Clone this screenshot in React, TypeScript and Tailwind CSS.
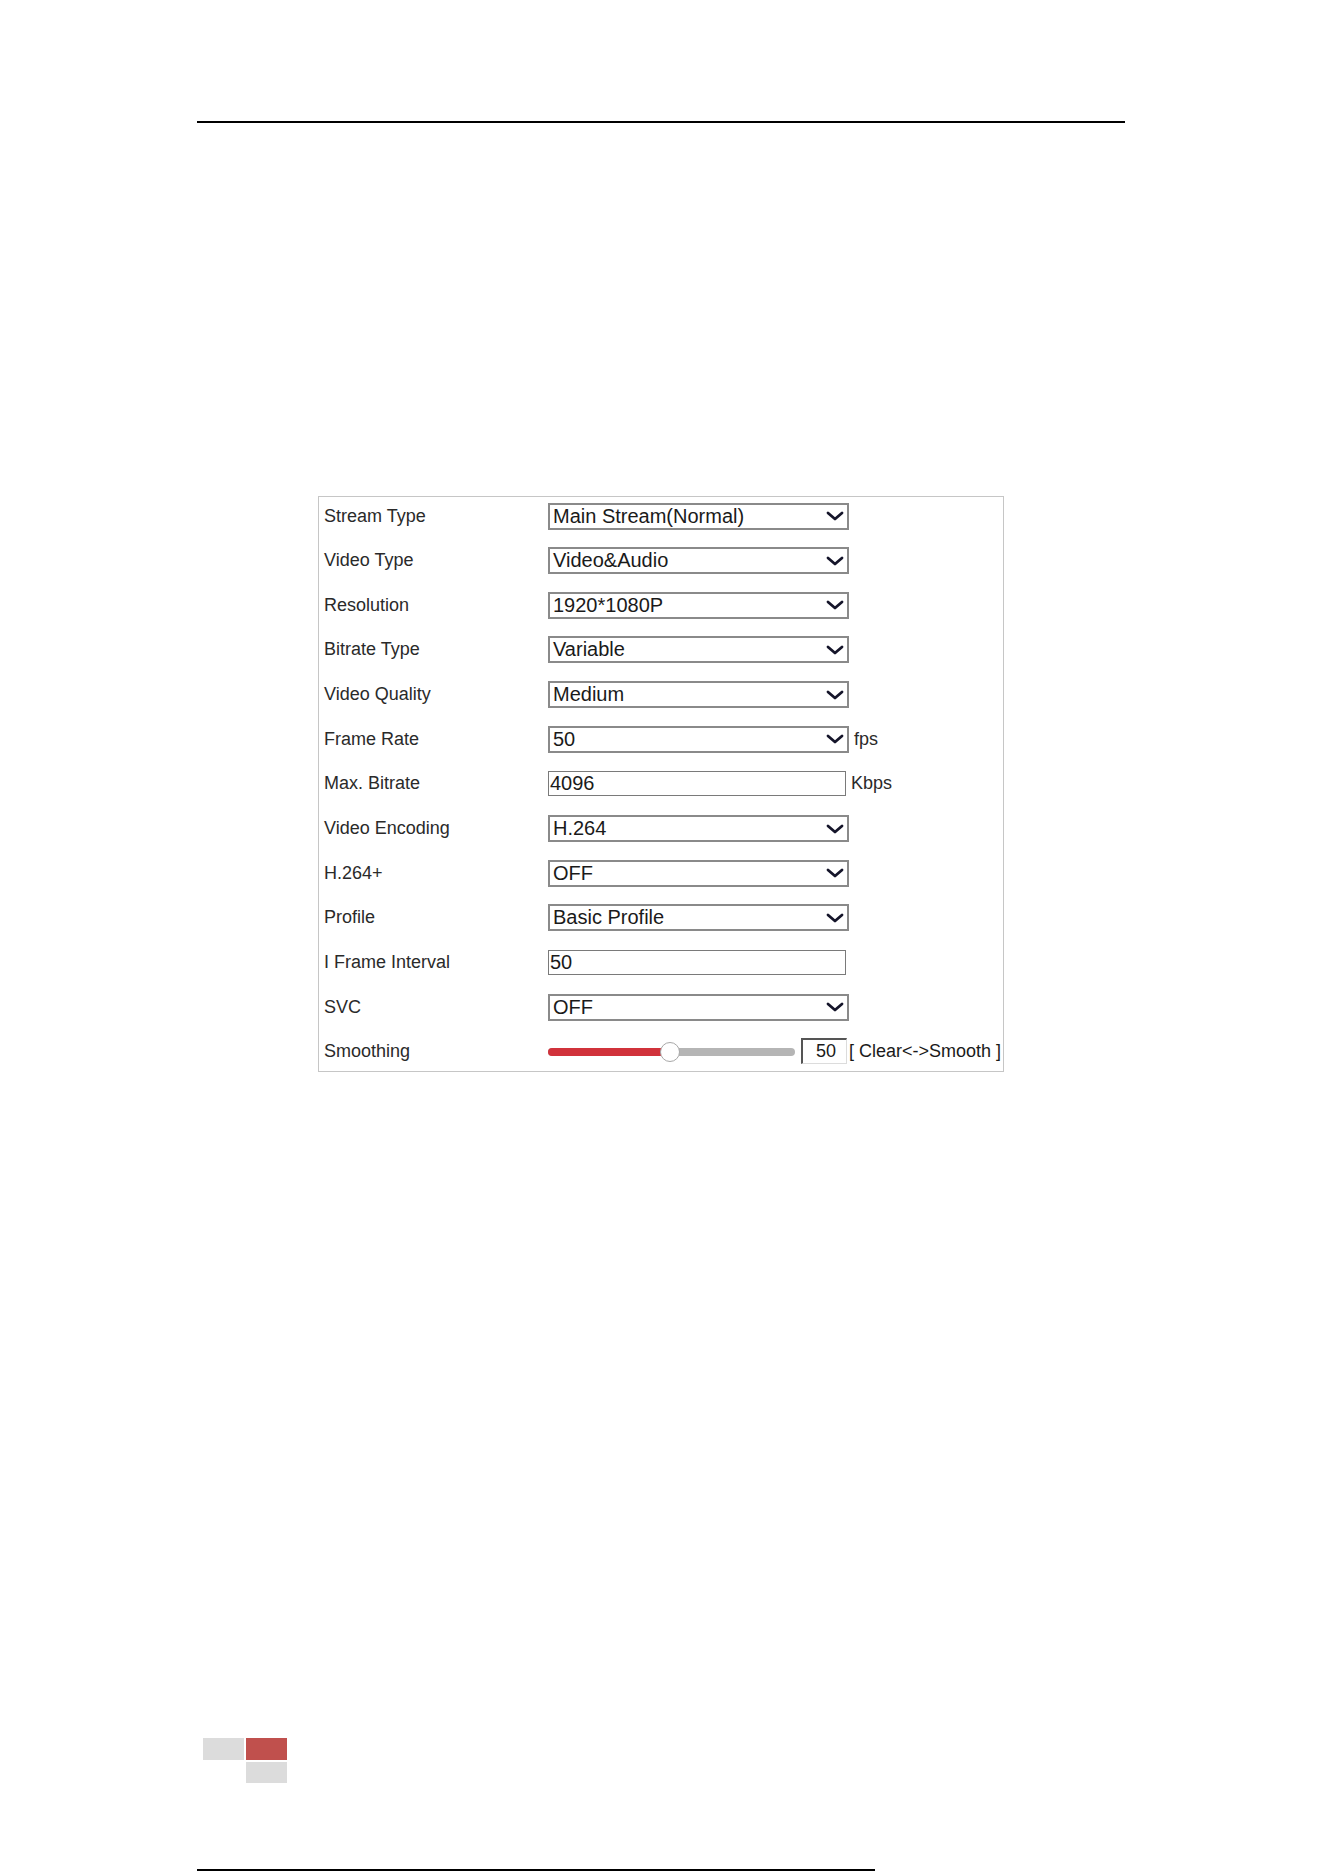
import React from 'react';

type Field =
  | { label: string; kind: 'select'; value: string; unit?: string }
  | { label: string; kind: 'text'; value: string; unit?: string }
  | { label: string; kind: 'slider'; value: number };

const fields: Field[] = [
  { label: 'Stream Type', kind: 'select', value: 'Main Stream(Normal)' },
  { label: 'Video Type', kind: 'select', value: 'Video&Audio' },
  { label: 'Resolution', kind: 'select', value: '1920*1080P' },
  { label: 'Bitrate Type', kind: 'select', value: 'Variable' },
  { label: 'Video Quality', kind: 'select', value: 'Medium' },
  { label: 'Frame Rate', kind: 'select', value: '50', unit: 'fps' },
  { label: 'Max. Bitrate', kind: 'text', value: '4096', unit: 'Kbps' },
  { label: 'Video Encoding', kind: 'select', value: 'H.264' },
  { label: 'H.264+', kind: 'select', value: 'OFF' },
  { label: 'Profile', kind: 'select', value: 'Basic Profile' },
  { label: 'I Frame Interval', kind: 'text', value: '50' },
  { label: 'SVC', kind: 'select', value: 'OFF' },
  { label: 'Smoothing', kind: 'slider', value: 50 },
];

function Chevron() {
  return (
    <svg width="18" height="10" viewBox="0 0 18 10" className="shrink-0">
      <polyline
        points="2,2 9,8 16,2"
        fill="none"
        stroke="#15152a"
        strokeWidth="2.8"
        strokeLinecap="round"
        strokeLinejoin="round"
      />
    </svg>
  );
}

function SelectBox({ value }: { value: string }) {
  return (
    <div className="flex h-[27px] w-[301px] items-center justify-between border-2 border-[#8a8a8a] bg-white pl-[3px] pr-[3px]">
      <span className="text-[20px] leading-[23px] text-[#1a1a1a]">{value}</span>
      <Chevron />
    </div>
  );
}

function TextBox({ value }: { value: string }) {
  return (
    <div className="flex h-[25px] w-[298px] items-center border border-[#7a7a7a] bg-white pl-[1px]">
      <span className="text-[20px] leading-[23px] text-[#1a1a1a]">{value}</span>
    </div>
  );
}

function Smoothing({ value }: { value: number }) {
  // track is 247px wide, thumb sits where the red fill ends
  const fill = Math.round((value / 100) * 226);
  return (
    <div className="flex items-center">
      <div className="relative flex h-[20px] w-[247px] items-center">
        <div className="flex h-[8px] w-full overflow-hidden rounded-full bg-[#b5b5b5]">
          <div className="h-full bg-[#d1323b]" style={{ width: fill + 4 }} />
        </div>
        <div
          className="absolute top-0 h-[20px] w-[20px] rounded-full border-[1.5px] border-[#a8a8a8] bg-white"
          style={{ left: fill - 1 }}
        />
      </div>
      <div className="ml-[6px] -mt-[2px] flex h-[26px] w-[46px] items-center justify-end border border-t-2 border-l-2 border-t-[#555] border-l-[#555] border-r-[#dcdcdc] border-b-[#dcdcdc] pr-[10px]">
        <span className="text-[18px] text-[#1a1a1a]">{value}</span>
      </div>
      <span className="ml-[2px] text-[18px] text-[#1a1a1a]">[ Clear&lt;-&gt;Smooth ]</span>
    </div>
  );
}

export default function App() {
  return (
    <div className="flex min-h-[1872px] w-[1324px] flex-col bg-white font-['Liberation_Sans',Arial,sans-serif]">
      <div className="ml-[197px] mt-[121px] h-[2px] w-[928px] bg-black" />

      <div className="ml-[318px] mt-[373px] flex w-[686px] flex-col gap-[6.67px] border border-[#c6c6c6] pl-[5px]">
        {fields.map((f) => (
          <div key={f.label} className="flex h-[38px] items-center">
            <div className="w-[224px] text-[18px] text-[#2a2a2a]">{f.label}</div>
            {f.kind === 'select' && (
              <div className="flex items-center">
                <SelectBox value={f.value} />
                {f.unit && <span className="ml-[5px] text-[18px] text-[#2a2a2a]">{f.unit}</span>}
              </div>
            )}
            {f.kind === 'text' && (
              <div className="flex items-center">
                <TextBox value={f.value} />
                {f.unit && <span className="ml-[5px] text-[18px] text-[#2a2a2a]">{f.unit}</span>}
              </div>
            )}
            {f.kind === 'slider' && <Smoothing value={f.value} />}
          </div>
        ))}
      </div>

      {/* page corner mark */}
      <div className="ml-[203px] mt-[666px] grid w-[84px] grid-cols-[41px_41px] grid-rows-[22px_21px] gap-[2px]">
        <div className="bg-[#dcdcdc]" />
        <div className="bg-[#c0504d]" />
        <div />
        <div className="bg-[#dcdcdc]" />
      </div>

      <div className="ml-[197px] mt-[86px] h-[2px] w-[678px] bg-black" />
    </div>
  );
}
